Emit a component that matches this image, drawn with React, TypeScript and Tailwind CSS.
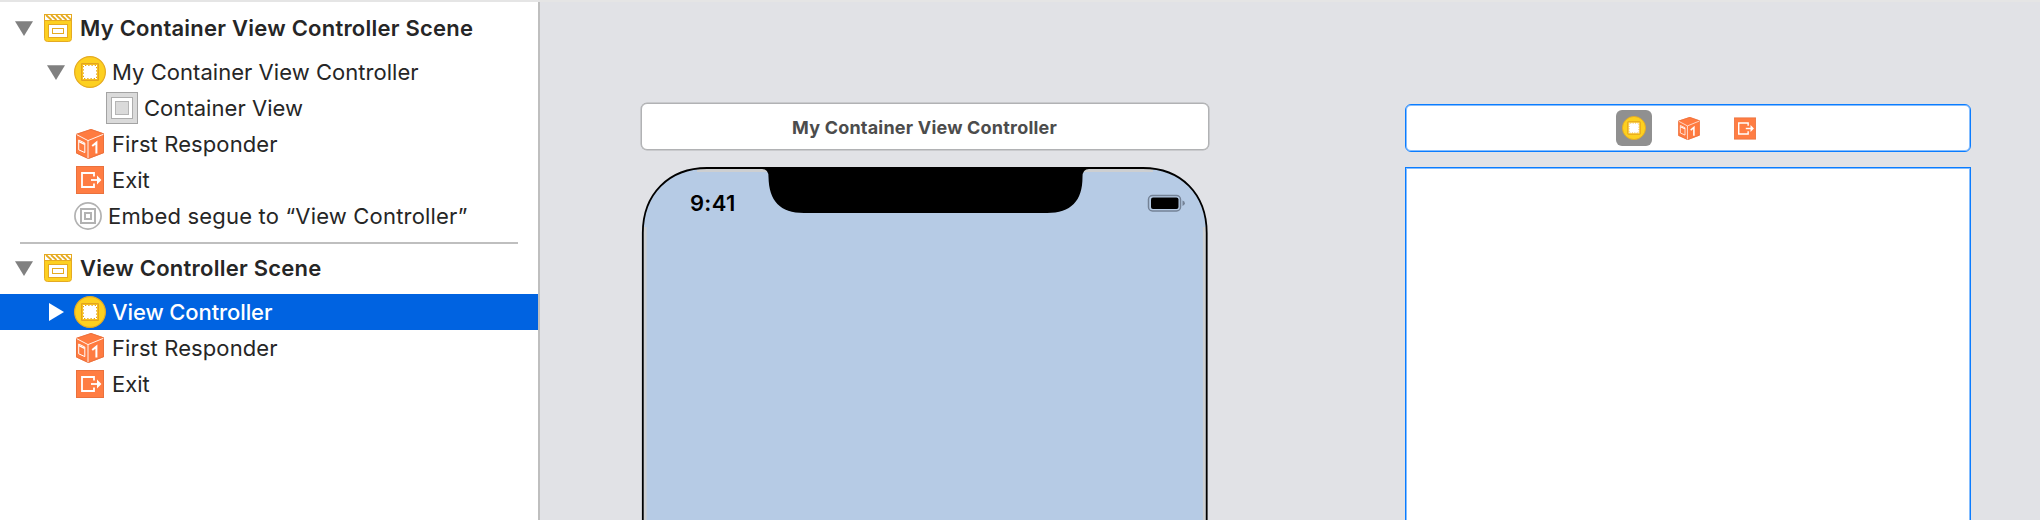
import React from "react";

function SceneIcon() {
  return (
    <svg className="h-7 w-7 shrink-0" viewBox="0 0 28 28">
      <path d="M.5 .5H27.5V24.5a3 3 0 0 1-3 3H3.5a3 3 0 0 1-3-3Z" fill="#fdd020" stroke="#e5aa22" />
      <rect x="1" y="1" width="26" height="5" fill="#fff" />
      <path d="M2 1L7.5 6M7 1L12.5 6M12 1L17.5 6M17 1L22.5 6M22 1L27 5.6" stroke="#e5aa22" strokeWidth="1.7" />
      <path d="M0 .5H28M0 6.5H28" stroke="#e5aa22" />
      <rect x="4.5" y="10.5" width="19" height="13" fill="#fff" stroke="#e5aa22" />
      <rect x="8.5" y="14.5" width="11" height="5" fill="#fff" stroke="#e5aa22" />
    </svg>
  );
}

function ControllerIcon({ className }: { className: string }) {
  return (
    <svg className={className} viewBox="0 0 32 32">
      <circle cx="16" cy="16" r="15.4" fill="#fdd020" stroke="#e5aa22" strokeWidth="1.2" />
      <rect x="7.6" y="7.6" width="16.8" height="16.8" rx=".6" fill="#fdc81c" stroke="#e3a41f" strokeWidth="1.2" />
      <rect x="9" y="9" width="14" height="14" fill="#fff" />
      <rect x="9.5" y="9.5" width="13" height="13" fill="none" stroke="#e0a21f" strokeDasharray="1.25 2" strokeDashoffset="-1.5" />
    </svg>
  );
}

function ContainerIcon() {
  return (
    <svg className="h-8 w-8 shrink-0" viewBox="0 0 32 32">
      <rect x=".5" y=".5" width="31" height="31" fill="#dadada" stroke="#a3a3a3" />
      <rect x="5.5" y="5.5" width="21" height="21" fill="#fff" stroke="#adadad" />
      <rect x="9.5" y="9.5" width="13" height="13" fill="#dadada" stroke="#b5b5b5" />
    </svg>
  );
}

function CubeIcon({ className }: { className: string }) {
  return (
    <svg className={className} viewBox="0 0 28 30">
      <path d="M15 0L28 4.6V24L12.3 30L0 24.3V5Z" fill="#ff7b40" />
      <path d="M15 .5L27.5 4.8V23.7L12.3 29.5L.5 24V5.3Z" fill="none" stroke="#e9703d" strokeWidth=".9" />
      <path d="M.6 5.6L12 11.6L27.4 5.3M12 11.6V29.3" fill="none" stroke="#fff" strokeWidth=".9" />
      <path d="M2.7 11L8.8 14V23.6L2.7 20.8Z" fill="none" stroke="#fff" strokeWidth="1" />
      <path d="M3 12.6L8.6 15.3" stroke="#fff" strokeWidth="1.4" />
      <path d="M16.2 17L20.4 13.6V24.6" fill="none" stroke="#fff" strokeWidth="2" />
    </svg>
  );
}

function ExitIcon({ className }: { className: string }) {
  return (
    <svg className={className} viewBox="0 0 28 28">
      <rect x=".5" y=".5" width="27" height="27" fill="#ff7d43" stroke="#ea713d" />
      <path d="M18 10.5V7H6V21H18V17.5" fill="none" stroke="#fff" strokeWidth="1.8" />
      <path d="M15 14H22" stroke="#fff" strokeWidth="1.8" />
      <path d="M21 9.6L25.4 14L21 18.4Z" fill="#fff" />
    </svg>
  );
}

function SegueIcon() {
  return (
    <svg className="h-7 w-7 shrink-0" viewBox="0 0 28 28" fill="none" stroke="#b2b2b2">
      <circle cx="14" cy="14" r="13.1" strokeWidth="1.7" />
      <rect x="7" y="7" width="14" height="14" strokeWidth="2" />
      <rect x="11" y="11" width="6" height="6" strokeWidth="2" />
    </svg>
  );
}

function Disclosure({ open = true }: { open?: boolean }) {
  return open ? (
    <svg className="h-[15px] w-[18px] shrink-0" viewBox="0 0 18 15">
      <path d="M0 .3H18L9 15Z" fill="#808080" />
    </svg>
  ) : (
    <svg className="ml-px h-[18px] w-[17px] shrink-0" viewBox="0 0 17 18">
      <path d="M0 0V18L15 9Z" fill="#fff" />
    </svg>
  );
}

function Row({ className, children }: { className: string; children: React.ReactNode }) {
  return <div className={`flex h-9 shrink-0 items-center whitespace-nowrap ${className}`}>{children}</div>;
}

function Sidebar() {
  return (
    <aside className="flex w-[540px] shrink-0 flex-col border-r-2 border-[#bfbfbf] bg-white pt-2 text-[22px] leading-9 text-[#262626]">
      <Row className="pl-[15px]">
        <Disclosure />
        <div className="w-[11px]" />
        <SceneIcon />
        <span className="ml-2 font-semibold tracking-[0.23px]">My Container View Controller Scene</span>
      </Row>
      <Row className="mt-2 pl-[47px]">
        <Disclosure />
        <div className="w-[9px]" />
        <ControllerIcon className="h-8 w-8 shrink-0" />
        <span className="ml-[6px] tracking-[0.04px]">My Container View Controller</span>
      </Row>
      <Row className="pl-[106px]">
        <ContainerIcon />
        <span className="ml-[6px] tracking-[0.04px]">Container View</span>
      </Row>
      <Row className="pl-[76px]">
        <CubeIcon className="h-[30px] w-7 shrink-0" />
        <span className="ml-2 tracking-[0.1px]">First Responder</span>
      </Row>
      <Row className="pl-[76px]">
        <ExitIcon className="h-7 w-7 shrink-0" />
        <span className="ml-2">Exit</span>
      </Row>
      <Row className="pl-[74px]">
        <SegueIcon />
        <span className="ml-[6px] tracking-[0.18px]">Embed segue to “View Controller”</span>
      </Row>
      <div className="mt-2 mr-5 ml-5 h-0.5 shrink-0 bg-[#bfbfbf]" />
      <Row className="mt-1.5 pl-[15px]">
        <Disclosure />
        <div className="w-[11px]" />
        <SceneIcon />
        <span className="ml-2 font-semibold tracking-[0.25px]">View Controller Scene</span>
      </Row>
      <Row className="mt-2 bg-[#0063e1] pl-[48px] font-medium text-white">
        <Disclosure open={false} />
        <div className="w-2" />
        <ControllerIcon className="h-8 w-8 shrink-0" />
        <span className="ml-[6px] tracking-[-0.1px]">View Controller</span>
      </Row>
      <Row className="pl-[76px]">
        <CubeIcon className="h-[30px] w-7 shrink-0" />
        <span className="ml-2 tracking-[0.1px]">First Responder</span>
      </Row>
      <Row className="pl-[76px]">
        <ExitIcon className="h-7 w-7 shrink-0" />
        <span className="ml-2">Exit</span>
      </Row>
    </aside>
  );
}

function PhoneFrame() {
  return (
    <svg className="block h-[353px] w-[568px]" viewBox="0 0 568 353">
      <path d="M1.8 360V66C1.8 27 28 1 66 1H502C540 1 565.700 27 565.700 66V360Z" fill="#b6cbe5" />
      <path d="M4.100 360V60M563.400 360V60M56 3.400H512" stroke="#cdcfd1" strokeWidth="3" fill="none" />
      <path
        d="M1.8 360V66C1.8 27 28 1 66 1H502C540 1 565.700 27 565.700 66V360"
        fill="none"
        stroke="#000"
        strokeWidth="1.800"
      />
      <path
        d="M72 0H496V2H448Q441.500 2 441.500 10C441.500 34 430 46 406 46H163C139 46 128 34 127.500 10Q127.500 2 121 2H72Z"
        fill="#000"
      />
      <rect x="507.500" y="28.500" width="32" height="15.500" rx="4" fill="none" stroke="#748296" strokeWidth="1.500" />
      <rect x="510" y="30.500" width="27.500" height="11.500" rx="2" fill="#000" />
      <path d="M541.500 33.500Q543.900 34.400 543.900 36.200T541.500 39Z" fill="#748296" />
    </svg>
  );
}

export default function App() {
  return (
    <div
      className="flex h-[520px] w-[2040px] flex-col overflow-hidden bg-[#e1e2e6]"
      style={{ fontFamily: 'Inter, "Liberation Sans", sans-serif' }}
    >
      <div className="h-0.5 shrink-0 bg-[#e5e5e5]" />
      <div className="flex min-h-0 flex-1">
        <Sidebar />
        <main className="flex pt-[101px] pl-[101px]">
          <section className="w-[568px]">
            <div className="flex h-[47px] items-center justify-center rounded-md border border-[#b1b2b4] bg-white pt-0.5 pr-px text-lg font-bold tracking-[0.2px] text-[#4c4c4c] shadow-[0_0_0_0.5px_#b1b2b4]">
              My Container View Controller
            </div>
            <div className="relative mt-[17px]">
              <PhoneFrame />
              <span className="absolute top-[22px] left-[49px] text-[22px] leading-7 font-semibold tracking-[0.3px] text-black">
                9:41
              </span>
            </div>
          </section>
          <section className="ml-[196px] w-[566px] pt-px">
            <div className="flex h-12 items-center justify-center rounded-md border border-[#0a7cff] bg-white pr-[5px] shadow-[inset_0_0_0_1px_#84bdff]">
              <div className="flex h-9 w-9 items-center justify-center rounded-md bg-[#909090]">
                <ControllerIcon className="h-6 w-6" />
              </div>
              <CubeIcon className="ml-[26px] h-[23px] w-[22px]" />
              <ExitIcon className="ml-[34px] h-[23px] w-[22px]" />
            </div>
            <div className="mt-[15px] h-[360px] border border-[#0a7cff] bg-white shadow-[inset_0_0_0_1px_#84bdff]" />
          </section>
        </main>
      </div>
    </div>
  );
}
